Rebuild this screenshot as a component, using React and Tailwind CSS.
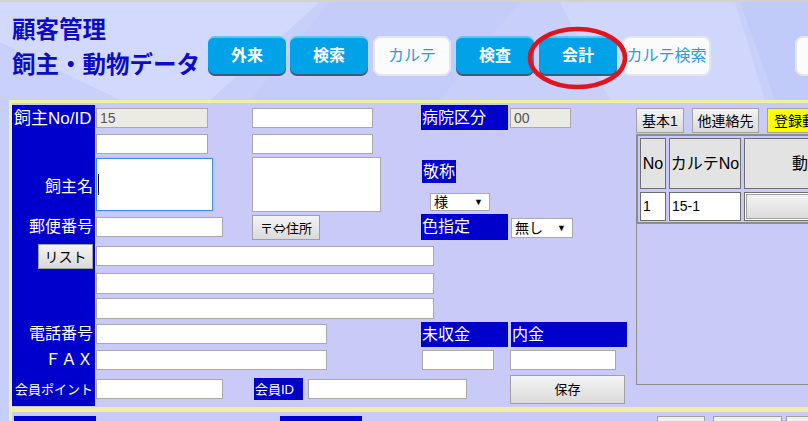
import React from "react";

const BLUE = "bg-[#0000cc]";

function Inp({ w, h = 20, disabled, children, className = "" }) {
  return (
    <div
      className={`${disabled ? "bg-[#ebebe4] text-[#545454]" : "bg-white"} border border-[#a9a9a9] ${className} shrink-0 flex items-center pl-[3px] text-[14px] leading-none`}
      style={{ width: w, height: h }}
    >
      {children}
    </div>
  );
}

function Lbl({ children, className = "", size = "text-[16px]" }) {
  return (
    <div className={`${BLUE} text-white ${size} leading-none flex items-center shrink-0 whitespace-nowrap ${className}`}>
      {children}
    </div>
  );
}

function GrayBtn({ children, className = "" }) {
  return (
    <div
      className={`border border-[#a0a0a0] bg-gradient-to-b from-[#f4f4f4] to-[#dadada] text-black flex items-center justify-center leading-none shrink-0 whitespace-nowrap ${className}`}
    >
      {children}
    </div>
  );
}

function Sel({ text, className = "" }) {
  return (
    <div className={`bg-white border border-[#a9a9a9] flex items-center justify-between pl-[3px] pr-[6px] text-[14px] leading-none ${className}`}>
      <span>{text}</span>
      <span className="text-[9px]">▼</span>
    </div>
  );
}

const blueBtn =
  "shrink-0 w-[78px] h-[38px] rounded-[7px] bg-[#02a2e8] border-t-2 border-[#5cc4f2] shadow-[0_2px_0_#3f5a78] text-white font-bold flex items-center justify-center";
const whiteBtn =
  "shrink-0 h-[40px] rounded-[8px] bg-[#fbfbfb] border-2 border-[#e4e6ee] text-[#2a9de0] flex items-center justify-center whitespace-nowrap";

export default function App() {
  return (
    <div className="w-[808px] h-[421px] overflow-hidden relative bg-[#c6cefa] font-['Liberation_Sans','Noto_Sans_CJK_JP',sans-serif]">
      {/* header */}
      <div className="h-[2px] bg-[#d2d2d2]" />
      <div className="relative h-[98px]">
        <svg className="absolute inset-0" width="808" height="98" viewBox="0 0 808 98">
          <rect width="808" height="98" fill="#c8d0fa" />
          <polygon points="0,0 320,0 210,98 0,98" fill="#d3d9fc" />
          <polygon points="0,40 120,98 0,98" fill="#c9d0f9" />
          <polygon points="330,0 520,0 440,98 250,98" fill="#c4ccf9" />
          <polygon points="560,0 735,0 765,98 610,98" fill="#d0d6fc" />
          <polygon points="740,0 808,0 808,98 775,98" fill="#c0cbf9" />
        </svg>
        <div className="relative flex pl-[12px]">
          <div className="w-[196px] shrink-0 pt-[11px] text-[#0c0cc4] font-bold text-[23.5px] leading-[35px] whitespace-nowrap">
            <div>顧客管理</div>
            <div>飼主・動物データ</div>
          </div>
          <div className="flex mt-[34px] text-[16px] leading-none">
            <div className={blueBtn}>外来</div>
            <div className={`ml-[4px] ${blueBtn}`}>検索</div>
            <div className={`ml-[5px] w-[78px] ${whiteBtn}`}>カルテ</div>
            <div className={`ml-[5px] ${blueBtn}`}>検査</div>
            <div className={`ml-[5px] ${blueBtn}`}>会計</div>
            <div className={`ml-[5px] w-[89px] ${whiteBtn}`}>カルテ検索</div>
            <div className={`ml-[84px] w-[78px] ${whiteBtn}`} />
          </div>
        </div>
      </div>

      {/* red ellipse annotation */}
      <svg className="absolute left-[526px] top-[25px]" width="104" height="66" viewBox="0 0 104 66">
        <ellipse cx="51.5" cy="33" rx="47.5" ry="29" fill="none" stroke="#e0141e" strokeWidth="4.5" />
      </svg>

      {/* main panel */}
      <div className="ml-[9px] border-l-[3px] border-t-[3px] border-[#f3efa2] bg-[#cacaf9] h-[307px] flex">
        <div className="pt-[2px] shrink-0">
          <div className="grid grid-cols-[83px_157px_169px_89px_120px] grid-rows-[26px_25px_57px_28px_29px_26px_25px_26px_26px_33px]">
            <div className={`col-start-1 row-start-1 row-span-10 ${BLUE}`} />

            {/* row 1 */}
            <div className="col-start-1 row-start-1 flex items-center pl-[2px] text-white text-[17px] leading-none whitespace-nowrap">飼主No/ID</div>
            <div className="col-start-2 row-start-1 pl-[1px] pt-[3px]"><Inp w={112} disabled>15</Inp></div>
            <div className="col-start-3 row-start-1 pt-[3px]"><Inp w={121} /></div>
            <div className="col-start-4 row-start-1"><Lbl className="w-[87px] h-[25px] pl-[1px]">病院区分</Lbl></div>
            <div className="col-start-5 row-start-1 pt-[3px]"><Inp w={61} disabled>00</Inp></div>

            {/* row 2 */}
            <div className="col-start-2 row-start-2 pl-[1px] pt-[3px]"><Inp w={112} /></div>
            <div className="col-start-3 row-start-2 pt-[3px]"><Inp w={121} /></div>

            {/* row 3 */}
            <div className="col-start-1 row-start-3 flex items-center justify-end pr-[2px] pt-[4px] text-white text-[16px] leading-none">飼主名</div>
            <div className="col-start-2 row-start-3 pl-[1px] pt-[2px]">
              <div className="w-[117px] h-[53px] bg-white border border-[#3d8fdf] shadow-[0_0_2px_#7fb6ee] flex items-center pl-[1px]">
                <div className="w-[1px] h-[21px] bg-black" />
              </div>
            </div>
            <div className="col-start-3 row-start-3 pt-[1px]"><div className="w-[129px] h-[55px] bg-white border border-[#a9a9a9]" /></div>
            <div className="col-start-4 row-start-3 pt-[4px] pl-[1px] flex flex-col items-start">
              <Lbl className="h-[23px] px-[1px]">敬称</Lbl>
              <Sel text="様" className="ml-[8px] mt-[10px] w-[60px] h-[18px]" />
            </div>

            {/* row 4 */}
            <div className="col-start-1 row-start-4 flex items-center justify-end pr-[2px] text-white text-[16px] leading-none">郵便番号</div>
            <div className="col-start-2 row-start-4 pl-[1px] pt-[4px]"><Inp w={127} /></div>
            <div className="col-start-3 row-start-4 pt-[2px]"><GrayBtn className="w-[68px] h-[25px] text-[13px] font-['Noto_Sans_CJK_JP',sans-serif]">〒⇔住所</GrayBtn></div>
            <div className="col-start-4 row-start-4 pt-[1px]"><Lbl className="w-[87px] h-[26px] pl-[1px]">色指定</Lbl></div>
            <div className="col-start-5 row-start-4 pl-[1px] pt-[5px]"><Sel text="無し" className="w-[62px] h-[20px]" /></div>

            {/* row 5 */}
            <div className="col-start-1 row-start-5 flex justify-end items-start pt-[3px] pr-[2px]"><GrayBtn className="w-[55px] h-[25px] text-[14px]">リスト</GrayBtn></div>
            <div className="col-start-2 col-span-3 row-start-5 pl-[1px] pt-[5px]"><Inp w={338} /></div>

            {/* row 6,7 */}
            <div className="col-start-2 col-span-3 row-start-6 pl-[1px] pt-[3px]"><Inp w={338} h={21} /></div>
            <div className="col-start-2 col-span-3 row-start-7 pl-[1px] pt-[2px]"><Inp w={338} h={21} /></div>

            {/* row 8 */}
            <div className="col-start-1 row-start-8 flex items-center justify-end pr-[2px] text-white text-[16px] leading-none">電話番号</div>
            <div className="col-start-2 col-span-2 row-start-8 pl-[1px] pt-[3px]"><Inp w={231} /></div>
            <div className="col-start-4 row-start-8 pt-[1px]"><Lbl className="w-[87px] h-[25px] pl-[1px]">未収金</Lbl></div>
            <div className="col-start-5 row-start-8 pl-[1px] pt-[1px]"><Lbl className="w-[116px] h-[25px] pl-[1px]">内金</Lbl></div>

            {/* row 9 */}
            <div className="col-start-1 row-start-9 flex items-center justify-end pr-[2px] text-white text-[16px] leading-none">ＦＡＸ</div>
            <div className="col-start-2 col-span-2 row-start-9 pl-[1px] pt-[3px]"><Inp w={231} /></div>
            <div className="col-start-4 row-start-9 pl-[1px] pt-[3px]"><Inp w={72} /></div>
            <div className="col-start-5 row-start-9 pt-[3px]"><Inp w={106} /></div>

            {/* row 10 */}
            <div className="col-start-1 row-start-10 flex items-center justify-end pr-[2px] text-white text-[13px] leading-none whitespace-nowrap">会員ポイント</div>
            <div className="col-start-2 row-start-10 pl-[1px] pt-[6px]"><Inp w={127} /></div>
            <div className="col-start-3 col-span-2 row-start-10 pl-[2px] pt-[5px] flex items-start">
              <Lbl size="text-[13px]" className="w-[49px] h-[22px] pl-[1px]">会員ID</Lbl>
              <Inp w={159} className="ml-[5px] mt-[1px]" />
            </div>
            <div className="col-start-5 row-start-10 pt-[2px]"><GrayBtn className="w-[115px] h-[29px] text-[13px]">保存</GrayBtn></div>
          </div>
        </div>

        {/* right side */}
        <div className="pl-[6px] pt-[5px] min-w-0 flex-1 overflow-hidden">
          <div className="flex text-[14px] leading-none whitespace-nowrap">
            <GrayBtn className="w-[48px] h-[25px]">基本1</GrayBtn>
            <GrayBtn className="ml-[8px] w-[67px] h-[25px]">他連絡先</GrayBtn>
            <div className="ml-[8px] w-[70px] h-[25px] shrink-0 bg-[#ffff00] border border-[#a0a0a0] flex items-center pl-[6px]">登録動物</div>
          </div>
          <div className="mt-[1px] w-[300px] h-[251px] border-l border-b border-[#8c8c8c]">
            <div className="w-[300px] border-t-2 border-b-2 border-l border-[#8c8c8c] pt-[2px] pl-[2px] pb-[1px] flex flex-col gap-[3px] text-black">
              <div className="flex gap-[3px] h-[51px]">
                <div className="w-[26px] shrink-0 bg-[#e3e3e3] border border-[#6e6e6e] flex items-center justify-center text-[16px]">No</div>
                <div className="w-[72px] shrink-0 bg-[#e3e3e3] border border-[#6e6e6e] flex items-center justify-center text-[16px] whitespace-nowrap">カルテNo</div>
                <div className="w-[144px] shrink-0 bg-[#e3e3e3] border border-[#6e6e6e] flex items-center justify-center text-[16px]">動物名</div>
              </div>
              <div className="flex gap-[3px] h-[29px]">
                <div className="w-[26px] shrink-0 bg-white border border-[#6e6e6e] flex items-center pl-[2px] text-[14px]">1</div>
                <div className="w-[72px] shrink-0 bg-white border border-[#6e6e6e] flex items-center pl-[2px] text-[14px]">15-1</div>
                <div className="w-[144px] shrink-0 bg-white border border-[#6e6e6e] p-[1px]">
                  <div className="h-full border border-[#a0a0a0] bg-gradient-to-b from-[#f2f2f2] to-[#dcdcdc]" />
                </div>
              </div>
            </div>
          </div>
        </div>
      </div>

      {/* lower panel */}
      <div className="ml-[9px] border-l-[3px] border-t-[5px] border-[#f3efa2] bg-[#cacaf9] h-[20px] flex pt-[4px]">
        <div className={`shrink-0 ml-[2px] w-[82px] h-[20px] ${BLUE}`} />
        <div className={`shrink-0 ml-[184px] w-[82px] h-[20px] ${BLUE}`} />
        <div className="shrink-0 ml-[295px] w-[48px] h-[20px] border border-[#a0a0a0] bg-[#f0f0f0]" />
        <div className="shrink-0 ml-[8px] w-[69px] h-[20px] border border-[#a0a0a0] bg-[#f0f0f0]" />
        <div className="shrink-0 ml-[4px] w-[40px] h-[20px] border border-[#a0a0a0] bg-[#f0f0f0]" />
      </div>
    </div>
  );
}
